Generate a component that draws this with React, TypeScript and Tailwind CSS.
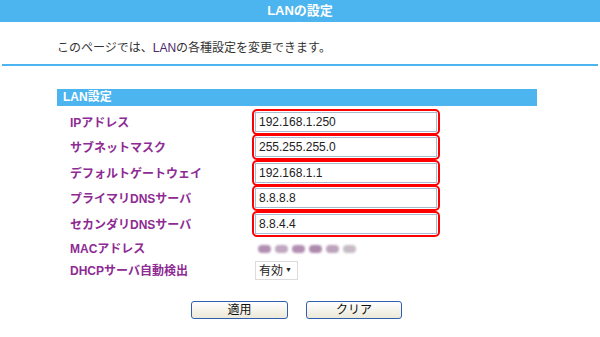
const rows = [
  { label: "IPアドレス", value: "192.168.1.250" },
  { label: "サブネットマスク", value: "255.255.255.0" },
  { label: "デフォルトゲートウェイ", value: "192.168.1.1" },
  { label: "プライマリDNSサーバ", value: "8.8.8.8" },
  { label: "セカンダリDNSサーバ", value: "8.8.4.4" },
]

const font = "font-['Liberation_Sans','Noto_Sans_CJK_JP',sans-serif]"

export default function App() {
  return (
    <div className={`w-[600px] h-[337px] bg-white text-[12px] text-[#333] ${font}`}>
      {/* Header */}
      <div className="h-[22px] bg-[#4cb4ee] flex items-center justify-center text-white text-[13px] font-bold">
        LANの設定
      </div>

      <div className="pl-[57px] pt-[18px] h-[42px] leading-[16px]">
        このページでは、<span className="text-[#4a2a6a]">LAN</span>の各種設定を変更できます。
      </div>
      <div className="mx-[2px] h-[2px] bg-[#4cb4ee]" />

      {/* Section */}
      <div className="ml-[57px] mt-[23px] w-[480px]">
        <div className="h-[17px] bg-[#4cb4ee] text-white font-bold pl-[6px] leading-[17px]">LAN設定</div>

        <div className="pl-[13px] pt-[3px]">
          {rows.map((r) => (
            <div key={r.label} className="flex items-center h-[25.5px]">
              <div className="w-[182px] text-[#8e2a93] font-bold pt-[2px]">{r.label}</div>
              <div className="w-[188px] h-[26px] border-2 border-[#ff0000] rounded-[5px] p-[1px] flex items-center">
                <div className="w-full h-[20px] border border-[#a7bbd2] bg-white pl-[3px] leading-[18px] text-[#222]">
                  {r.value}
                </div>
              </div>
            </div>
          ))}

          <div className="flex items-center h-[24px]">
            <div className="w-[182px] text-[#8e2a93] font-bold">MACアドレス</div>
            <div className="flex gap-[4px] pl-[6px] blur-[1.2px]">
              {["#b28fb2", "#c0a8c0", "#b28fb2", "#ad8aad", "#bca2bc", "#c6bcc6"].map((c, i) => (
                <span key={i} className="w-[13px] h-[8px] rounded-full" style={{ background: c }} />
              ))}
            </div>
          </div>

          <div className="flex items-center h-[20px]">
            <div className="w-[182px] text-[#8e2a93] font-bold">DHCPサーバ自動検出</div>
            <div className="ml-[3px] w-[43px] h-[19px] border border-[#dcdcdc] bg-white flex items-center justify-between px-[3px] text-[#222]">
              <span>有効</span>
              <span className="text-[7px] pr-[2px]">▼</span>
            </div>
          </div>
        </div>
      </div>

      {/* Buttons */}
      <div className="flex gap-[18px] mt-[20px] pl-[191px]">
        <button className="w-[97px] h-[18px] border border-[#2f5fb0] rounded-[3px] bg-gradient-to-b from-white to-[#ece9d8] text-[#111] text-[12px] leading-[14px]">
          適用
        </button>
        <button className="w-[96px] h-[18px] border border-[#2f5fb0] rounded-[3px] bg-gradient-to-b from-white to-[#ece9d8] text-[#111] text-[12px] leading-[14px]">
          クリア
        </button>
      </div>
    </div>
  )
}
